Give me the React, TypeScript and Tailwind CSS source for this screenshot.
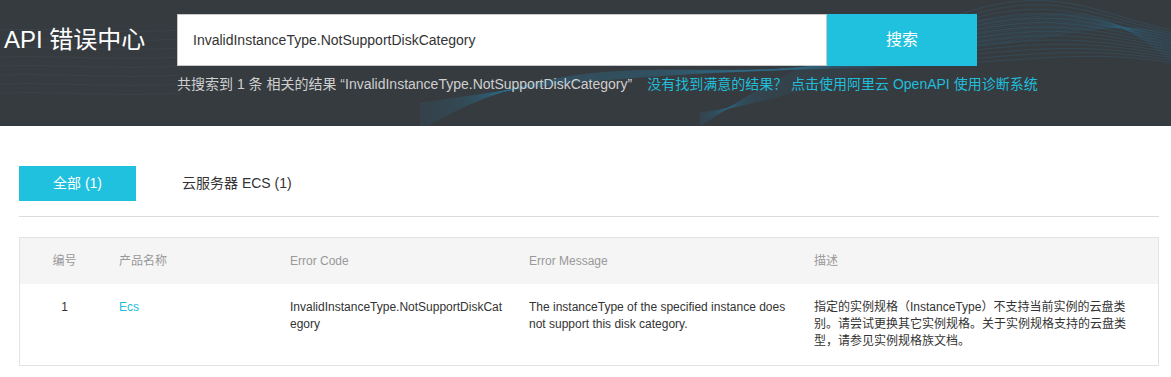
import React from 'react';

const font = '"Liberation Sans", "Noto Sans CJK SC", sans-serif';

function Waves() {
  const lines = Array.from({ length: 14 }, (_, i) => i);
  return (
    <svg
      className="absolute inset-0 w-full h-full pointer-events-none"
      viewBox="0 0 1171 126"
      preserveAspectRatio="none"
    >
      {lines.map((i) => (
        <path
          key={'a' + i}
          d={`M 420 ${130 - i * 2} C 600 ${20 + i * 4}, 760 ${110 - i * 3}, 900 ${40 + i * 2} S 1080 ${10 + i * 3}, 1171 ${30 + i * 2.5}`}
          fill="none"
          stroke="#2f6d8c"
          strokeOpacity={0.35}
          strokeWidth={0.8}
        />
      ))}
      {lines.map((i) => (
        <path
          key={'b' + i}
          d={`M 700 ${126 - i} C 800 ${60 + i * 3}, 880 ${30 + i * 2}, 980 ${20 + i * 2} S 1100 ${5 + i}, 1171 ${60 - i * 2}`}
          fill="none"
          stroke="#2f6d8c"
          strokeOpacity={0.25}
          strokeWidth={0.8}
        />
      ))}
      {lines.slice(0, 8).map((i) => (
        <path
          key={'c' + i}
          d={`M 0 ${30 + i * 9} C 60 ${28 + i * 9}, 120 ${34 + i * 9}, 180 ${30 + i * 9}`}
          fill="none"
          stroke="#4a5a66"
          strokeOpacity={0.25}
          strokeWidth={0.8}
        />
      ))}
    </svg>
  );
}

export default function App() {
  return (
    <div className="w-[1171px] min-h-[377px] bg-white" style={{ fontFamily: font }}>
      <div className="relative h-[126px] bg-[#363b40] overflow-hidden">
        <Waves />
        <div className="relative flex">
          <h1 className="w-[177px] pl-[4px] pt-[26px] text-[24px] leading-[28px] text-white font-normal">
            API 错误中心
          </h1>
          <div className="pt-[14px]">
            <div className="flex h-[52px]">
              <div className="w-[650px] bg-white border border-[#c8c8c8] flex items-center pl-[15px] text-[14px] text-[#333]">
                InvalidInstanceType.NotSupportDiskCategory
              </div>
              <button className="w-[150px] bg-[#20c1de] text-white text-[16px]">搜索</button>
            </div>
            <div className="mt-[8px] text-[14px] leading-[20px] text-[#cfcfcf]">
              共搜索到 1 条 相关的结果 “InvalidInstanceType.NotSupportDiskCategory”
              <span className="ml-[15px] text-[#20bedb]">没有找到满意的结果？ 点击使用阿里云 OpenAPI 使用诊断系统</span>
            </div>
          </div>
        </div>
      </div>

      <div className="pl-[19px] pr-[12px] pt-[40px]">
        <div className="flex items-center h-[35px] text-[14px]">
          <div className="w-[117px] h-full bg-[#20c1de] text-white flex items-center justify-center">全部 (1)</div>
          <div className="pl-[46px] text-[#333]">云服务器 ECS (1)</div>
        </div>
        <div className="mt-[15px] border-t border-[#dcdcdc]" />

        <div className="mt-[20px] border border-[#e3e3e3] text-[12px]">
          <div className="grid grid-cols-[89px_171px_239px_285px_1fr] h-[46px] items-center bg-[#f5f5f5] text-[#999]">
            <div className="text-center">编号</div>
            <div className="px-[10px]">产品名称</div>
            <div className="px-[10px]">Error Code</div>
            <div className="px-[10px]">Error Message</div>
            <div className="px-[10px]">描述</div>
          </div>
          <div className="grid grid-cols-[89px_171px_239px_285px_1fr] py-[15px] leading-[17px] text-[#333]">
            <div className="text-center">1</div>
            <div className="px-[10px] text-[#20bedb]">Ecs</div>
            <div className="pl-[10px] pr-[16px] break-all">InvalidInstanceType.NotSupportDiskCategory</div>
            <div className="px-[10px]">The instanceType of the specified instance does not support this disk category.</div>
            <div className="px-[10px] whitespace-nowrap">
              指定的实例规格（InstanceType）不支持当前实例的云盘类
              <br />
              别。请尝试更换其它实例规格。关于实例规格支持的云盘类
              <br />
              型，请参见实例规格族文档。
            </div>
          </div>
        </div>
      </div>
    </div>
  );
}
